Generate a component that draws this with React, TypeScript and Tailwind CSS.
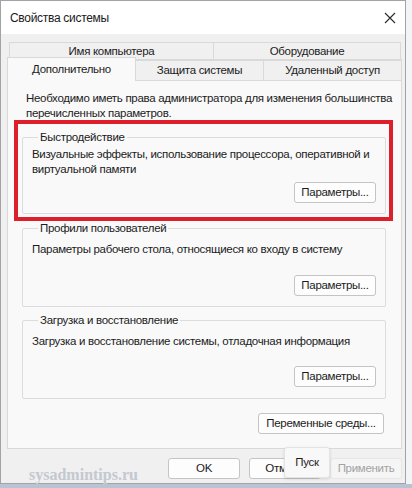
import type { ReactNode } from 'react';

const font = { fontFamily: '"Liberation Sans", Arial, sans-serif' };
const txt = 'text-[11.5px] tracking-[-0.3px] text-[#1b1b1b] whitespace-nowrap';

function Button({ children, className = '' }: { children: ReactNode; className?: string }) {
  return (
    <div
      className={`h-[21px] flex items-center justify-center rounded-[3px] border border-[#c4c4c4] bg-[#fdfdfd] ${txt} ${className}`}
    >
      {children}
    </div>
  );
}

function Group({ title, text, className = '', textClass = '', btnClass = '' }: {
  title: string;
  text: ReactNode;
  className?: string;
  textClass?: string;
  btnClass?: string;
}) {
  return (
    <fieldset className={`mr-[15px] ml-[14px] border border-[#dcdcdc] rounded-[2px] pl-[9px] pr-[9px] ${className}`}>
      <legend className={`ml-[6px] px-[2px] leading-[15px] ${txt}`}>{title}</legend>
      <p className={`leading-[15px] ${txt} ${textClass}`}>{text}</p>
      <div className={`flex justify-end ${btnClass}`}>
        <Button className="w-[82px]">Параметры...</Button>
      </div>
    </fieldset>
  );
}

export default function App() {
  return (
    <div className="w-[412px] h-[488px] bg-[#f3f4f6] flex flex-col overflow-hidden" style={font}>
      <div className="relative w-[406px] h-[484px] border border-[#a3a3a3] bg-[#f0f0f0] flex flex-col">
        {/* заголовок окна */}
        <div className="h-[33px] bg-white flex items-center justify-between pl-[9px] pr-[5px] shrink-0">
          <span className={`${txt} text-[12px]`}>Свойства системы</span>
          <svg width="16" height="16" viewBox="0 0 16 16" className="mr-[2px]">
            <path d="M3 3 L13 13 M13 3 L3 13" stroke="#2a2a2a" strokeWidth="1.1" fill="none" />
          </svg>
        </div>

        <div className="pl-[6px] pr-[3px] pt-[8px]">
          {/* вкладки, первый ряд */}
          <div className="flex h-[19px] ml-[2px]">
            <div className={`w-[205px] border border-[#d9d9d9] flex items-center justify-center ${txt}`}>Имя компьютера</div>
            <div className={`w-[188px] -ml-px border border-[#d9d9d9] flex items-center justify-center ${txt}`}>Оборудование</div>
          </div>
          {/* второй ряд */}
          <div className="flex items-end h-[20px] -mt-px">
            <div className={`relative z-10 w-[129px] h-[24px] -mb-px border border-b-0 border-[#d9d9d9] bg-[#f9f9f9] flex items-start justify-center pt-[3px] ${txt}`}>
              Дополнительно
            </div>
            <div className={`w-[129px] h-[21px] -ml-px border border-b-0 border-[#d9d9d9] flex items-center justify-center pt-[2px] ${txt}`}>
              Защита системы
            </div>
            <div className={`w-[139px] h-[21px] -ml-px border border-b-0 border-[#d9d9d9] flex items-center justify-center pt-[2px] ${txt}`}>
              Удаленный доступ
            </div>
          </div>

          {/* панель вкладки */}
          <div className="w-[395px] h-[369px] border border-[#d9d9d9] bg-[#f9f9f9] flex flex-col">
            <p className={`pl-[18px] pt-[10px] leading-[15px] ${txt}`}>
              Необходимо иметь права администратора для изменения большинства
              <br />
              перечисленных параметров.
            </p>

            <div className="relative mt-[9px]">
              <Group
                title="Быстродействие"
                text={<>Визуальные эффекты, использование процессора, оперативной и<br />виртуальной памяти</>}
                className="pb-[10px]"
                textClass="mt-[2px]"
                btnClass="mt-[5px]"
              />
              {/* красная рамка */}
              <div className="absolute left-[6px] right-[8px] top-[-10px] bottom-[-7px] border-[4px] border-[#dc1f2b] pointer-events-none" />
            </div>

            <Group
              title="Профили пользователей"
              text="Параметры рабочего стола, относящиеся ко входу в систему"
              className="mt-[7px] pb-[10px]"
              textClass="mt-[6px]"
              btnClass="mt-[18px]"
            />

            <Group
              title="Загрузка и восстановление"
              text="Загрузка и восстановление системы, отладочная информация"
              className="mt-[6px] pb-[11px]"
              textClass="mt-[6px]"
              btnClass="mt-[17px]"
            />

            <div className="flex justify-end mt-[14px] mr-[17px]">
              <Button className="w-[126px]">Переменные среды...</Button>
            </div>
          </div>

          {/* кнопки диалога */}
          <div className="flex justify-end gap-[9px] mt-[9px]">
            <Button className="w-[72px]">OK</Button>
            <Button className="w-[72px]">Отмена</Button>
            <div className="w-[72px] h-[21px] flex items-center justify-center rounded-[3px] border border-[#e6e6e6] bg-[#f5f5f5] text-[11.5px] tracking-[-0.3px] text-[#a2a2a2]">
              Применить
            </div>
          </div>
        </div>

        {/* всплывающая подсказка */}
        <div className={`absolute left-[283px] top-[446px] w-[46px] h-[31px] rounded-[3px] border border-[#e4e4e4] bg-[#f8f8f8] shadow-[0_1px_3px_rgba(0,0,0,0.12)] flex items-center justify-center ${txt}`}>
          Пуск
        </div>

        {/* водяной знак */}
        <div
          className="absolute left-[28px] top-[465px] text-[16px] font-bold text-[#c3c8d1] leading-[18px]"
          style={{ fontFamily: '"Liberation Serif", "Times New Roman", serif' }}
        >
          sysadmintips.ru
        </div>
      </div>
      <div className="h-[4px] bg-[#b7c4d4]" />
    </div>
  );
}
